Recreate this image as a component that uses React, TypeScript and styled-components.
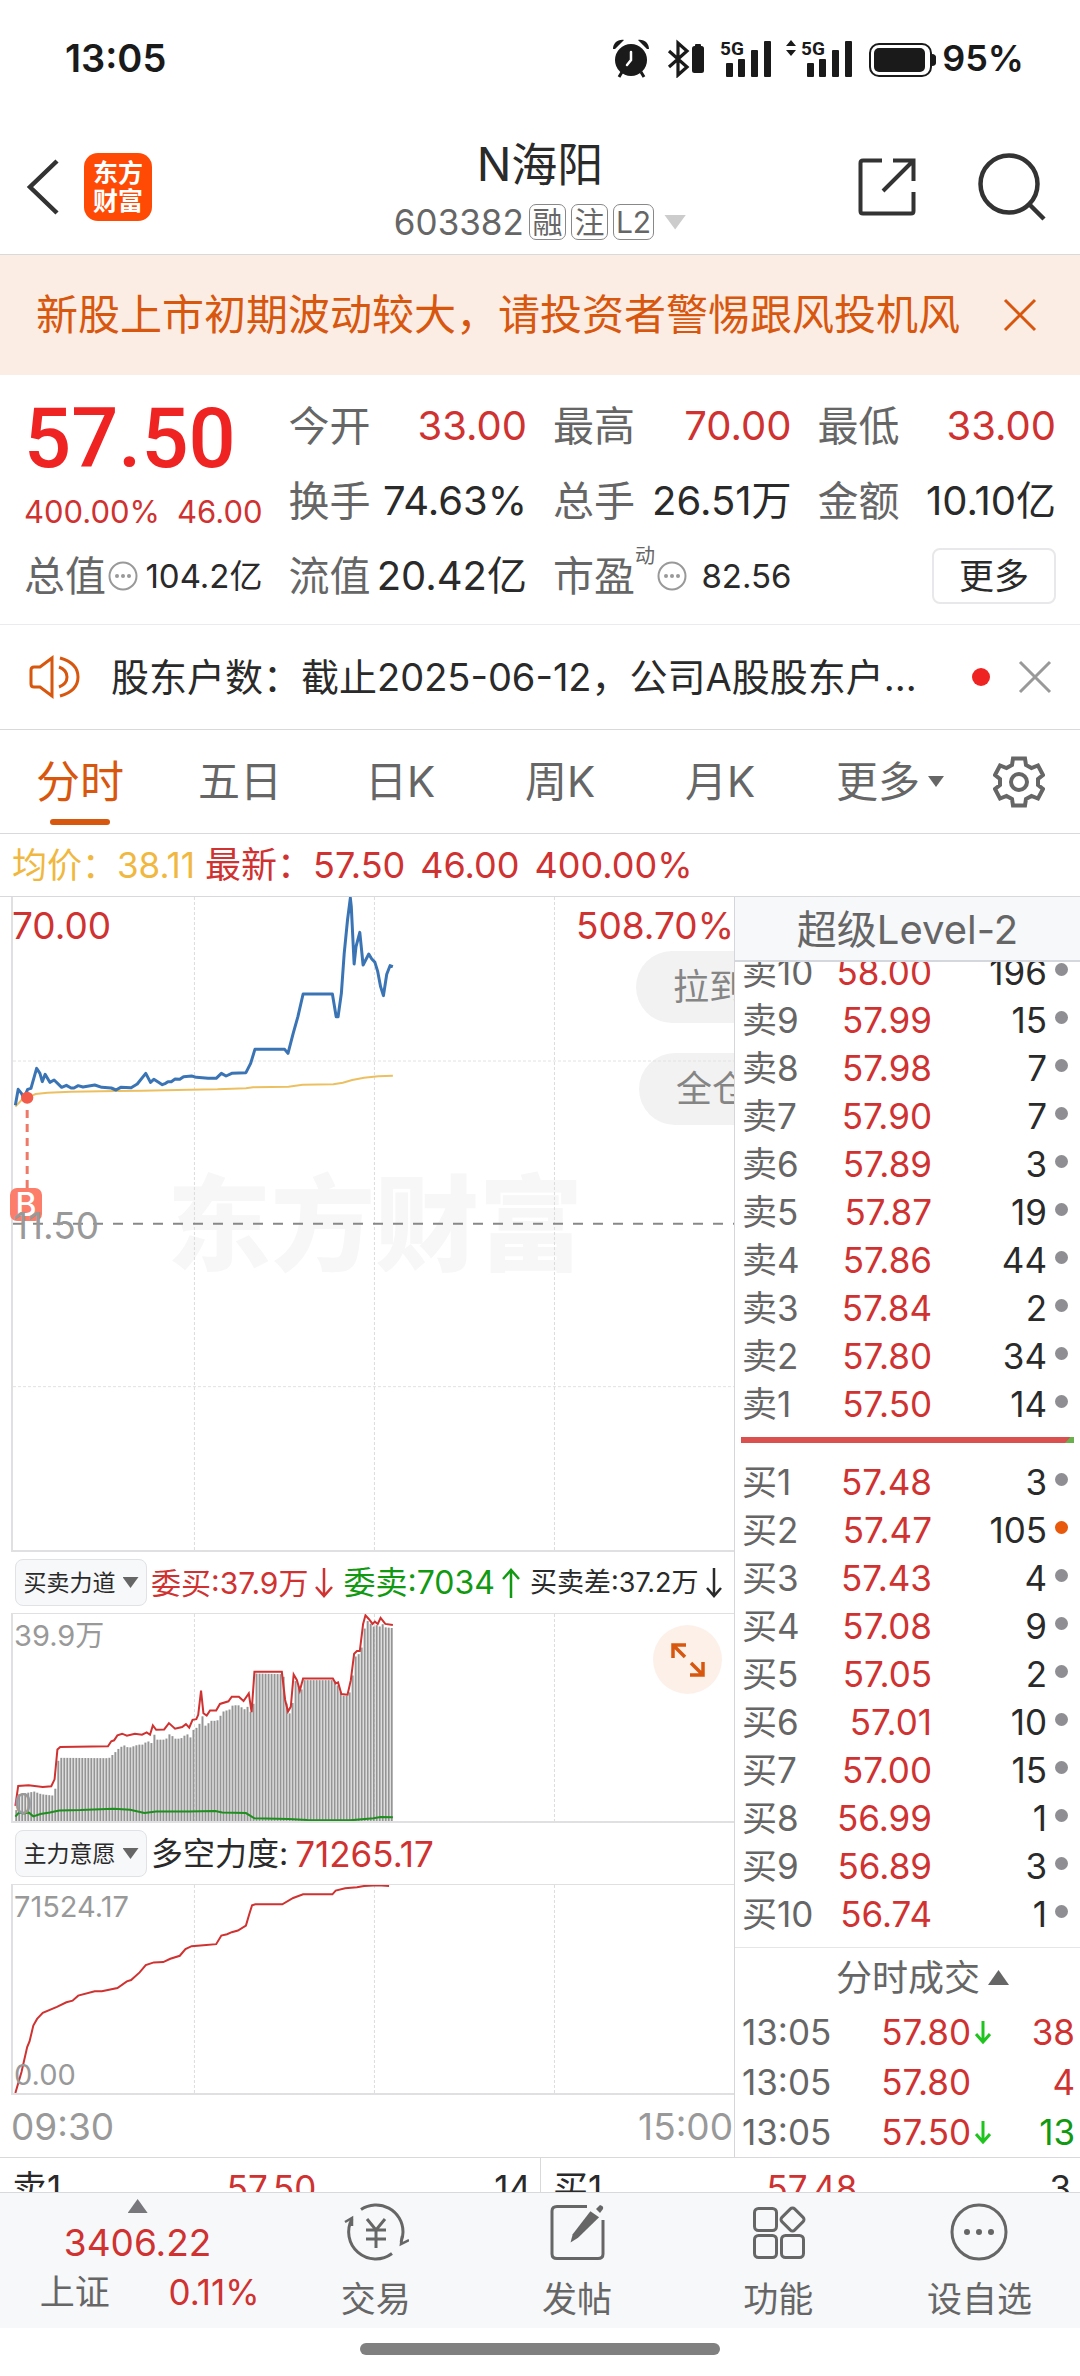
import React from "react";
import styled, { createGlobalStyle } from "styled-components";

const color = {
  red: "#cf3230",
  green: "#119911",
  orange: "#d8570f",
  text: "#2a2a2a",
  sub: "#666666",
  mute: "#999999",
  line: "#d9d9db",
  panel: "#f7f8fa",
};

const GlobalStyle = createGlobalStyle`
  * { box-sizing: border-box; }
  body {
    margin: 0;
    background: #fff;
    color: ${color.text};
    font-family: "Inter", "Noto Sans CJK SC", sans-serif;
  }
  button { font: inherit; color: inherit; background: none; border: 0; padding: 0; cursor: pointer; }
  a { color: inherit; text-decoration: none; }
  dl, dd, dt, h1, p { margin: 0; font-weight: 400; }
  svg { display: block; }
`;

const Page = styled.div`
  display: flex;
  flex-direction: column;
  width: 100%;
  overflow: hidden;
`;

/* ---------- status bar ---------- */

const StatusBar = styled.div`
  display: flex;
  align-items: center;
  justify-content: space-between;
  height: 120px;
  padding: 0 56px 4px 65px;
  color: #1a1a1a;
  font-size: 38px;
  font-weight: 600;
  line-height: 40px;
`;

const StatusRight = styled.div`
  display: flex;
  align-items: center;
  gap: 4px;
  font-size: 36px;
`;

const SignalBars = ({ x }: { x: number }) => (
  <g>
    <text x={x - 6} y={17} fontFamily="Roboto, sans-serif" fontWeight={700} fontSize={19}>5G</text>
    <rect x={x} y={25} width={7} height={14} rx={1} />
    <rect x={x + 12} y={21} width={7} height={18} rx={1} />
    <rect x={x + 25} y={12} width={7} height={27} rx={1} />
    <rect x={x + 38} y={3} width={7} height={36} rx={1} />
  </g>
);

const StatusIcons = () => (
  <svg width="325" height="40" viewBox="0 0 325 40" fill="#1a1a1a" aria-hidden="true">
    <circle cx="18" cy="22" r="16" />
    <path d="M0 11C0 5 5 1 11 2L2 11Z M36 11C36 5 31 1 25 2L34 11Z" />
    <path d="M9 34L6 39M28 34L31 39" stroke="#1a1a1a" strokeWidth="3" />
    <path d="M18 14V22L14 27" fill="none" stroke="#fff" strokeWidth="2.5" strokeLinecap="round" />
    <path d="M56 13L74 29L65 37V5L74 13L56 29" fill="none" stroke="#1a1a1a" strokeWidth="3.2" />
    <rect x="79" y="8" width="12" height="27" rx="2.5" />
    <rect x="82" y="6" width="6" height="4" rx="1" />
    <SignalBars x={113} />
    <path d="M173 8L178 2L183 8ZM173 12L178 18L183 12Z" />
    <SignalBars x={194} />
    <rect x="257" y="6" width="61" height="32" rx="9" fill="none" stroke="#1a1a1a" strokeWidth="2" />
    <rect x="261" y="10" width="51" height="24" rx="5" />
    <path d="M319 16C322 16 323 18 323 19V25C323 26 322 28 319 28Z" />
  </svg>
);

/* ---------- header ---------- */

const Header = styled.header`
  display: grid;
  grid-template-columns: 1fr auto 1fr;
  align-items: center;
  height: 135px;
  padding: 0 26px;
  border-bottom: 1px solid ${color.line};
`;

const HeaderSide = styled.div<{ $end?: boolean }>`
  display: flex;
  align-items: center;
  justify-content: ${(p) => (p.$end ? "flex-end" : "flex-start")};
  gap: ${(p) => (p.$end ? 62 : 24)}px;
  padding-right: ${(p) => (p.$end ? 8 : 0)}px;
`;

const Logo = styled.div`
  display: grid;
  place-content: center;
  width: 68px;
  height: 68px;
  border-radius: 14px;
  background: #ff4a05;
  color: #fff;
  font-size: 25px;
  font-weight: 700;
  line-height: 28px;
  text-align: center;
`;

const TitleBlock = styled.div`
  display: flex;
  flex-direction: column;
  align-items: center;
  gap: 10px;
`;

const Title = styled.h1`
  font-size: 46px;
  line-height: 60px;
`;

const CodeLine = styled.button`
  display: flex;
  align-items: center;
  gap: 5px;
  color: ${color.sub};
  font-size: 35px;
  line-height: 36px;
`;

const Tag = styled.span`
  display: grid;
  place-content: center;
  min-width: 37px;
  height: 36px;
  padding: 0 2px;
  border: 1px solid #888;
  border-radius: 7px;
  font-size: 30px;
  line-height: 30px;
`;

const Triangle = styled.span<{ $up?: boolean; $size: number; $fill: string }>`
  display: inline-block;
  flex: none;
  width: ${(p) => p.$size}px;
  height: ${(p) => Math.round(p.$size * 0.7)}px;
  background: ${(p) => p.$fill};
  clip-path: ${(p) => (p.$up ? "polygon(50% 0, 100% 100%, 0 100%)" : "polygon(0 0, 100% 0, 50% 100%)")};
`;

const CodeArrow = styled.span`
  display: flex;
  padding-left: 5px;
`;

/* ---------- banner ---------- */

const Banner = styled.div`
  display: flex;
  align-items: center;
  justify-content: space-between;
  height: 120px;
  padding: 0 43px 0 36px;
  background: #fcede4;
  color: ${color.orange};
  font-size: 42px;
  line-height: 60px;
  white-space: nowrap;
`;

const Cross = ({ stroke }: { stroke: string }) => (
  <svg width="34" height="34" viewBox="0 0 34 34" aria-hidden="true">
    <path d="M2 2L32 32M32 2L2 32" stroke={stroke} strokeWidth="3" />
  </svg>
);

/* ---------- quote ---------- */

const Quote = styled.dl`
  display: grid;
  grid-template-columns: repeat(4, minmax(0, 1fr));
  grid-auto-rows: 75px;
  column-gap: 26px;
  padding: 13px 24px 11px;
  border-bottom: 1px solid #ebebed;
`;

const PriceCell = styled.div`
  grid-row: span 2;
  display: flex;
  flex-direction: column;
  gap: 15px;
  padding-top: 9px;
  color: ${color.red};
`;

const BigPrice = styled.dd`
  color: #f02323;
  font-family: "Roboto", sans-serif;
  font-size: 83px;
  font-weight: 500;
  line-height: 84px;
`;

const Change = styled.dd`
  display: flex;
  justify-content: space-between;
  font-size: 31px;
  line-height: 32px;
`;

const Cell = styled.div`
  display: flex;
  align-items: center;
  justify-content: space-between;
  white-space: nowrap;
  line-height: 60px;
`;

const Label = styled.dt`
  display: flex;
  align-items: center;
  color: ${color.sub};
  font-size: 41px;
`;

const Value = styled.dd<{ $red?: boolean; $small?: boolean }>`
  color: ${(p) => (p.$red ? color.red : color.text)};
  font-size: ${(p) => (p.$small ? 33 : 40)}px;
`;

const Sup = styled.sup`
  align-self: flex-start;
  font-size: 20px;
  line-height: 20px;
`;

const InfoButton = styled.button`
  display: flex;
  padding: 0 2px;
`;

const Info = () => (
  <InfoButton aria-label="说明">
    <svg width="30" height="30" viewBox="0 0 30 30" fill="#999" aria-hidden="true">
      <circle cx="15" cy="15" r="13.5" fill="none" stroke="#999" strokeWidth="2" />
      <circle cx="9" cy="15" r="2" />
      <circle cx="15" cy="15" r="2" />
      <circle cx="21" cy="15" r="2" />
    </svg>
  </InfoButton>
);

const MoreButton = styled.button`
  align-self: center;
  justify-self: end;
  height: 56px;
  padding: 0 25px;
  border: 2px solid #e8e8ea;
  border-radius: 8px;
  font-size: 35px;
  line-height: 50px;
`;

/* ---------- news ---------- */

const News = styled.div`
  display: flex;
  align-items: center;
  height: 105px;
  padding: 0 28px 0 29px;
  border-bottom: 1px solid ${color.line};
  font-size: 38px;
  line-height: 60px;
`;

const NewsText = styled.a`
  flex: 1;
  min-width: 0;
  padding-left: 30px;
  white-space: nowrap;
`;

const NewsDot = styled.span`
  width: 18px;
  height: 18px;
  margin-right: 28px;
  border-radius: 50%;
  background: #f02323;
`;

/* ---------- tabs ---------- */

const Tabs = styled.nav`
  display: grid;
  grid-template-columns: repeat(5, 160fr) 180fr 100fr;
  height: 104px;
  border-bottom: 1px solid ${color.line};
`;

const Tab = styled.button<{ $active?: boolean }>`
  position: relative;
  display: flex;
  align-items: center;
  justify-content: center;
  gap: 8px;
  color: ${(p) => (p.$active ? color.orange : color.sub)};
  font-size: ${(p) => (p.$active ? 44 : 42)}px;
  line-height: 60px;
  &::after {
    content: "";
    position: absolute;
    left: 50%;
    bottom: 8px;
    width: 60px;
    height: 6px;
    margin-left: -30px;
    border-radius: 3px;
    background: ${(p) => (p.$active ? color.orange : "transparent")};
  }
`;

const SettingsTab = styled(Tab)`
  justify-content: flex-start;
  padding-left: 13px;
`;

const Gear = () => (
  <svg width="52" height="52" viewBox="0 0 52 52" fill="none" stroke="#666" strokeWidth="4" aria-hidden="true">
    <path d="M20 2.5H32L33 9L38.500 12L45 9.500L50 19L45 23V29L50 33L45 42.500L38.500 40L33 43L32 49.500H20L19 43L13.500 40L7 42.500L2 33L7 29V23L2 19L7 9.500L13.500 12L19 9Z" />
    <circle cx="26" cy="26" r="8" />
  </svg>
);

const Legend = styled.div`
  display: flex;
  align-items: center;
  gap: 10px;
  height: 63px;
  padding: 0 12px;
  border-bottom: 1px solid ${color.line};
  color: ${color.red};
  font-size: 35px;
  line-height: 50px;
  white-space: nowrap;
`;

const Average = styled.span`
  color: #f0b840;
`;

const Latest = styled.span`
  display: flex;
  gap: 15px;
  font-size: 36px;
`;

/* ---------- charts ---------- */

const Main = styled.main`
  display: grid;
  grid-template-columns: minmax(0, 1fr) 346px;
`;

const Charts = styled.section`
  display: flex;
  flex-direction: column;
  overflow: hidden;
`;

const Plot = styled.div<{ $height: number; $top?: boolean }>`
  position: relative;
  height: ${(p) => p.$height}px;
  margin-left: 11px;
  border-left: 2px solid #e0e0e2;
  border-bottom: 2px solid #e0e0e2;
  border-top: ${(p) => (p.$top ? "1px solid #e0e0e2" : "0")};
`;

const Canvas = styled.svg`
  position: absolute;
  inset: 0;
  width: 100%;
  height: 100%;
  path, line { vector-effect: non-scaling-stroke; fill: none; }
`;

const PlotLabel = styled.span<{ $x?: number; $right?: boolean; $y: number; $tone: string; $big?: boolean }>`
  position: absolute;
  top: ${(p) => p.$y}px;
  ${(p) => (p.$right ? "right: 0;" : `left: ${p.$x ?? 1}px;`)}
  color: ${(p) => p.$tone};
  font-size: ${(p) => (p.$big ? 37 : 29)}px;
  line-height: 40px;
`;

const Watermark = styled.span`
  position: absolute;
  top: 268px;
  left: 154px;
  color: #f7f7f8;
  font-size: 104px;
  font-weight: 900;
  line-height: 120px;
`;

const BuyMark = styled.span`
  position: absolute;
  top: 291px;
  left: -3px;
  width: 32px;
  height: 33px;
  border-radius: 7px;
  background: #fb7d6a;
  color: #fff;
  font-size: 32px;
  font-weight: 500;
  line-height: 33px;
  text-align: center;
`;

const Pill = styled.button<{ $y: number; $width: number }>`
  position: absolute;
  top: ${(p) => p.$y}px;
  right: -60px;
  width: ${(p) => p.$width}px;
  height: 72px;
  padding-left: 37px;
  border-radius: 36px;
  background: #f2f2f2;
  color: #858585;
  font-size: 36px;
  line-height: 70px;
  text-align: left;
  white-space: nowrap;
`;

const Expand = styled.button`
  position: absolute;
  top: 11px;
  right: 12px;
  display: grid;
  place-content: center;
  width: 69px;
  height: 69px;
  border-radius: 50%;
  background: #fdf0e9;
`;

const IndicatorRow = styled.div`
  display: flex;
  align-items: center;
  gap: 4px;
  height: 61px;
  padding-left: 15px;
  white-space: nowrap;
  line-height: 40px;
`;

const Picker = styled.button`
  display: flex;
  flex: none;
  align-items: center;
  justify-content: center;
  gap: 7px;
  width: 132px;
  height: 47px;
  border: 1px solid #e0e2e6;
  border-radius: 8px;
  background: ${color.panel};
  font-size: 23px;
`;

const Figure = styled.span<{ $tone: string; $size: number }>`
  display: flex;
  flex: none;
  align-items: center;
  gap: 7px;
  margin-right: 6px;
  color: ${(p) => p.$tone};
  font-size: ${(p) => p.$size}px;
`;

const Strength = styled.span`
  color: ${color.red};
  font-size: 35px;
`;

const Arrow = ({ up, stroke = "currentColor", w = 18, h = 30 }: { up?: boolean; stroke?: string; w?: number; h?: number }) => (
  <svg width={w} height={h} viewBox={`0 0 ${w} ${h}`} fill="none" stroke={stroke} strokeWidth={h > 25 ? 2.5 : 3} aria-hidden="true">
    {up ? (
      <path d={`M${w / 2} ${h}V2M1 ${w / 2 + 2}L${w / 2} 2L${w - 1} ${w / 2 + 2}`} />
    ) : (
      <path d={`M${w / 2} 0V${h - 2}M1 ${h - w / 2 - 2}L${w / 2} ${h - 2}L${w - 1} ${h - w / 2 - 2}`} />
    )}
  </svg>
);

const TimeAxis = styled.div`
  display: flex;
  align-items: center;
  justify-content: space-between;
  height: 62px;
  padding: 2px 1px 0 11px;
  color: ${color.mute};
  font-size: 37px;
  line-height: 40px;
`;

type Point = [number, number];
const parse = (s: string): Point[] => s.split(" ").map((p) => p.split(",").map(Number) as Point);

const price = "32,676 38,628 45,640 50,655 58,628 65,625 77,565 84,580 89,605 95,583 105,607 114,600 130,622 140,616 150,624 156,624 165,617 175,621 200,615 215,622 235,624 245,630 255,622 277,623 290,612 308,580 318,607 325,598 335,607 343,614 350,610 355,605 362,605 370,597 380,598 388,590 405,588 415,592 440,595 457,595 468,580 478,588 490,580 520,578 530,550 539,508 602,508 609,520 620,460 630,410 641,342 703,342 711,410 715,410 722,340 728,220 735,120 741,54 743,80 749,252 753,200 761,157 768,255 780,222 786,236 793,247 799,275 805,320 811,347 818,283 825,257 831,260";
const average = "32,680 45,660 57,653 75,642 100,638 150,635 245,633 300,632 400,629 460,628 520,625 535,622 610,620 640,614 705,613 725,608 745,600 770,593 800,589 831,587";
const bids = "32,830 38,770 60,768 90,773 108,771 115,750 121,660 127,652 228,650 235,635 241,632 248,617 258,612 268,618 285,612 300,615 310,608 317,615 323,587 330,600 347,599 357,580 370,597 385,592 393,583 400,594 407,570 415,568 419,555 425,482 430,550 437,557 444,542 457,542 465,522 483,514 490,500 505,500 515,513 526,490 532,547 538,425 596,425 603,510 609,545 615,530 621,433 628,450 634,482 641,445 704,445 710,460 715,457 722,492 735,494 742,450 749,370 755,362 761,362 768,280 773,254 780,265 788,280 793,273 799,280 805,262 815,280 831,283";
const asks = "32,863 40,850 50,853 60,850 70,862 85,855 105,850 125,844 170,843 240,839 275,842 305,852 330,847 400,847 455,846 470,850 520,852 538,868 610,870 650,873 740,874 790,868 805,864 831,865";
const spread = "32,843 38,795 70,787 85,795 108,799 114,785 120,695 127,685 228,686 240,670 250,655 260,647 270,655 290,645 300,645 310,633 317,645 323,612 330,630 348,630 357,612 368,627 380,627 393,612 400,625 407,600 418,590 425,555 432,588 445,573 457,573 470,545 485,538 490,526 502,526 515,538 522,530 532,558 539,430 597,432 603,515 609,552 615,545 621,450 628,460 634,487 641,450 704,450 711,463 722,497 736,497 742,455 749,380 755,372 761,370 768,300 774,270 780,275 787,290 793,280 799,294 805,275 811,290 831,293";
const intent = "32,823 45,760 57,685 62,668 70,620 78,600 90,582 120,564 140,550 153,545 165,530 200,517 215,517 248,507 268,487 277,483 295,460 308,438 325,430 345,429 360,419 380,410 392,390 405,381 430,378 457,375 468,349 480,345 490,339 503,334 520,319 527,285 533,258 540,255 597,255 620,236 641,225 703,225 710,214 730,207 755,204 770,200 800,198 823,200";

const toPath = (s: string) => "M" + parse(s).map((p) => p.join(" ")).join("L");

const valueAt = (points: Point[], x: number) => {
  const i = points.findIndex((p) => p[0] >= x);
  if (i < 0) return points[points.length - 1][1];
  if (i === 0) return points[0][1];
  const [x0, y0] = points[i - 1];
  const [x1, y1] = points[i];
  return y0 + ((y1 - y0) * (x - x0)) / (x1 - x0);
};

const spreadPoints = parse(spread);
const STEP = 6.357;
const spreadBars = Array.from({ length: 126 }, (_, i) => {
  const x = 31.8 + i * STEP;
  return { x, y: valueAt(spreadPoints, x) };
});

const Columns = ({ from, to }: { from: number; to: number }) => (
  <>
    {[411, 792, 1173].map((x) => (
      <line key={x} x1={x} x2={x} y1={from} y2={to} stroke="#dcdcdf" strokeWidth="1" strokeDasharray="3 2" />
    ))}
  </>
);

/* ---------- order book ---------- */

const Book = styled.aside`
  display: flex;
  flex-direction: column;
  border-left: 1px solid #d4d6da;
`;

const BookTitle = styled.button`
  height: 65px;
  padding-top: 3px;
  border-bottom: 2px solid #d4d8de;
  background: ${color.panel};
  color: ${color.sub};
  font-size: 40px;
  line-height: 60px;
`;

const AskWindow = styled.div`
  display: flex;
  flex-direction: column;
  justify-content: flex-end;
  height: 466px;
  overflow: hidden;
`;

const BookTable = styled.table`
  width: 100%;
  flex: none;
  table-layout: fixed;
  border-collapse: collapse;
  font-size: 35px;
  line-height: 48px;
  white-space: nowrap;
  td, th { height: 48px; padding: 0; text-align: right; font-weight: 400; }
  th { width: 88px; padding-left: 7px; text-align: left; color: ${color.sub}; }
`;

const PriceTd = styled.td`
  width: 109px;
  color: ${color.red};
`;

const DotTd = styled.td`
  width: 33px;
`;

const Dot = styled.span<{ $hot?: boolean }>`
  display: block;
  width: 13px;
  height: 13px;
  margin: 0 0 6px 8px;
  border-radius: 50%;
  background: ${(p) => (p.$hot ? "#e8590c" : "#8e8e93")};
`;

const Balance = styled.div`
  display: flex;
  justify-content: flex-end;
  height: 6px;
  margin: 9px 6px 15px;
  background: #d9504e;
  &::after {
    content: "";
    width: 9px;
    background: #6ab04c;
    clip-path: polygon(100% 0, 100% 100%, 0 100%, 60% 0);
  }
`;

const TradesTitle = styled.button`
  display: flex;
  align-items: center;
  justify-content: center;
  gap: 8px;
  height: 60px;
  margin-top: 9px;
  padding-left: 30px;
  border-top: 1px solid #e6e6e8;
  color: ${color.sub};
  font-size: 36px;
  line-height: 50px;
`;

const Trades = styled.table`
  width: 100%;
  table-layout: fixed;
  border-collapse: collapse;
  font-size: 35px;
  line-height: 50px;
  td { height: 50px; padding: 0; text-align: right; }
  td:first-child { width: 110px; padding-left: 7px; text-align: left; color: ${color.sub}; }
  td:nth-child(2) { width: 126px; color: ${color.red}; }
  td:nth-child(3) { width: 24px; padding-left: 4px; }
`;

const Volume = styled.td<{ $sell?: boolean }>`
  && { padding-right: 5px; }
  color: ${(p) => (p.$sell ? color.green : color.red)};
`;

const sells = [
  ["卖10", "58.00", "196"], ["卖9", "57.99", "15"], ["卖8", "57.98", "7"], ["卖7", "57.90", "7"], ["卖6", "57.89", "3"],
  ["卖5", "57.87", "19"], ["卖4", "57.86", "44"], ["卖3", "57.84", "2"], ["卖2", "57.80", "34"], ["卖1", "57.50", "14"],
];
const buys = [
  ["买1", "57.48", "3"], ["买2", "57.47", "105"], ["买3", "57.43", "4"], ["买4", "57.08", "9"], ["买5", "57.05", "2"],
  ["买6", "57.01", "10"], ["买7", "57.00", "15"], ["买8", "56.99", "1"], ["买9", "56.89", "3"], ["买10", "56.74", "1"],
];
const trades = [
  { price: "57.80", volume: "38", down: true, sell: false },
  { price: "57.80", volume: "4", down: false, sell: false },
  { price: "57.50", volume: "13", down: true, sell: true },
];

const Levels = ({ rows }: { rows: string[][] }) => (
  <BookTable>
    <tbody>
      {rows.map(([name, value, volume]) => (
        <tr key={name}>
          <th scope="row">{name}</th>
          <PriceTd>{value}</PriceTd>
          <td>{volume}</td>
          <DotTd><Dot $hot={name === "买2"} /></DotTd>
        </tr>
      ))}
    </tbody>
  </BookTable>
);

/* ---------- bottom ---------- */

const BestRow = styled.div`
  display: grid;
  grid-template-columns: 1fr 1fr;
  height: 35px;
  overflow: hidden;
  border-top: 1px solid ${color.line};
`;

const Best = styled.div`
  display: grid;
  grid-template-columns: 1fr auto 1fr;
  height: 60px;
  padding: 0 9px 0 12px;
  font-size: 35px;
  line-height: 60px;
  & + & { border-left: 1px solid ${color.line}; }
  span:nth-child(2) { color: ${color.red}; }
  span:nth-child(3) { text-align: right; }
`;

const BottomNav = styled.nav`
  display: grid;
  grid-template-columns: 275fr repeat(4, 201fr);
  height: 136px;
  border-top: 1px solid ${color.line};
  background: ${color.panel};
  color: ${color.sub};
  font-size: 35px;
`;

const IndexButton = styled.button`
  display: flex;
  flex-direction: column;
  align-items: center;
  padding-top: 6px;
  color: ${color.red};
  font-size: 37px;
  line-height: 50px;
`;

const IndexValue = styled.span`
  margin-top: 5px;
`;

const IndexChange = styled.span`
  display: flex;
  justify-content: space-between;
  width: 244px;
  padding-left: 24px;
  color: ${color.red};
  font-size: 35px;
  line-height: 48px;
`;

const IndexName = styled.span`
  color: ${color.sub};
`;

const NavItem = styled.a`
  display: flex;
  flex-direction: column;
  align-items: center;
  gap: 11px;
  padding-top: 8px;
  line-height: 50px;
`;

const NavSvg = styled.svg.attrs({ width: 66, height: 62, viewBox: "0 0 66 62", "aria-hidden": true })`
  fill: none;
  stroke: #666;
  stroke-width: 3;
`;

const TradeIcon = () => (
  <NavSvg>
    <path d="M18 8.500A27 27 0 0 1 60 31Q60 36 58 41" />
    <path d="M49 52.500A27 27 0 0 1 9 18" />
    <path d="M2 21L9 17V25M66 39L58 43L59 35" strokeWidth="2.500" />
    <path d="M24 18L33 29L42 18M33 29V47M23 29H43M23 38H43" />
  </NavSvg>
);

const PostIcon = () => (
  <NavSvg>
    <path d="M43 5.500H13Q8 5.500 8 10V53Q8 57.500 13 57.500H54Q59 57.500 59 53V19" />
    <path d="M48 11L56 18L33 36L25 40L28 32Z" fill="#666" stroke="none" transform="rotate(-6 40 26)" />
    <path d="M52 8L56 4Q60 5 59 8L56 12Z" fill="#666" stroke="none" />
  </NavSvg>
);

const GridIcon = () => (
  <NavSvg>
    <rect x="9.500" y="7.500" width="22" height="22" rx="4" />
    <rect x="9.500" y="34.500" width="22" height="22" rx="4" />
    <rect x="36.500" y="34.500" width="22" height="22" rx="4" />
    <rect x="38.500" y="9.500" width="18" height="18" rx="3" transform="rotate(45 47.500 18.500)" />
  </NavSvg>
);

const DotsIcon = () => (
  <NavSvg>
    <circle cx="33" cy="31" r="27" />
    <g fill="#666" stroke="none">
      <circle cx="21" cy="31" r="3" />
      <circle cx="33" cy="31" r="3" />
      <circle cx="45" cy="31" r="3" />
    </g>
  </NavSvg>
);

const HomeArea = styled.div`
  display: flex;
  justify-content: center;
  height: 48px;
  padding-top: 15px;
`;

const HomeBar = styled.div`
  width: 33.3%;
  height: 12px;
  border-radius: 6px;
  background: #808080;
`;

export default function App() {
  return (
    <Page>
      <GlobalStyle />
      <StatusBar>
        <span>13:05</span>
        <StatusRight>
          <StatusIcons />
          <span>95%</span>
        </StatusRight>
      </StatusBar>

      <Header>
        <HeaderSide>
          <button aria-label="返回">
            <svg width="34" height="56" viewBox="0 0 34 56" fill="none" aria-hidden="true">
              <path d="M31 2L4 28L31 54" stroke="#333" strokeWidth="4.500" />
            </svg>
          </button>
          <Logo>东方<br />财富</Logo>
        </HeaderSide>
        <TitleBlock>
          <Title>N海阳</Title>
          <CodeLine>
            603382<Tag>融</Tag><Tag>注</Tag><Tag>L2</Tag>
            <CodeArrow><Triangle $size={22} $fill="#ccc" /></CodeArrow>
          </CodeLine>
        </TitleBlock>
        <HeaderSide $end>
          <button aria-label="分享">
            <svg width="58" height="58" viewBox="0 0 58 58" fill="none" stroke="#333" strokeWidth="4" aria-hidden="true">
              <path d="M24 2.500H5Q2.500 2.500 2.500 5V53Q2.500 55.500 5 55.500H53Q55.500 55.500 55.500 53V34" />
              <path d="M35 2.500H55.500V23M55 3L25 33" />
            </svg>
          </button>
          <button aria-label="搜索">
            <svg width="68" height="68" viewBox="0 0 68 68" fill="none" stroke="#333" strokeWidth="4.500" aria-hidden="true">
              <circle cx="31" cy="31" r="28.500" />
              <path d="M51 51L66 66" />
            </svg>
          </button>
        </HeaderSide>
      </Header>

      <Banner>
        <span>新股上市初期波动较大，请投资者警惕跟风投机风</span>
        <button aria-label="关闭提示"><Cross stroke={color.orange} /></button>
      </Banner>

      <Quote>
        <PriceCell>
          <BigPrice>57.50</BigPrice>
          <Change><span>400.00%</span><span>46.00</span></Change>
        </PriceCell>
        <Cell><Label>今开</Label><Value $red>33.00</Value></Cell>
        <Cell><Label>最高</Label><Value $red>70.00</Value></Cell>
        <Cell><Label>最低</Label><Value $red>33.00</Value></Cell>
        <Cell><Label>换手</Label><Value>74.63%</Value></Cell>
        <Cell><Label>总手</Label><Value>26.51万</Value></Cell>
        <Cell><Label>金额</Label><Value>10.10亿</Value></Cell>
        <Cell><Label>总值<Info /></Label><Value $small>104.2亿</Value></Cell>
        <Cell><Label>流值</Label><Value>20.42亿</Value></Cell>
        <Cell><Label>市盈<Sup>动</Sup><Info /></Label><Value $small>82.56</Value></Cell>
        <MoreButton>更多</MoreButton>
      </Quote>

      <News>
        <svg width="52" height="44" viewBox="0 0 52 44" fill="none" stroke={color.orange} strokeWidth="3" aria-hidden="true">
          <path d="M23 3L11 12H5Q2 12 2 15V29Q2 32 5 32H11L23 41Z" />
          <path d="M30 12Q38 15 38 22T30 32M31 3Q49 8 49 22T31 41" />
        </svg>
        <NewsText href="#news">股东户数：截止2025-06-12，公司A股股东户...</NewsText>
        <NewsDot />
        <button aria-label="关闭公告"><Cross stroke="#999" /></button>
      </News>

      <Tabs>
        <Tab $active>分时</Tab>
        <Tab>五日</Tab>
        <Tab>日K</Tab>
        <Tab>周K</Tab>
        <Tab>月K</Tab>
        <Tab>更多<Triangle $size={16} $fill="#666" /></Tab>
        <SettingsTab aria-label="设置"><Gear /></SettingsTab>
      </Tabs>

      <Legend>
        <Average>均价：38.11</Average>
        <Latest>
          <span>最新：57.50</span>
          <span>46.00</span>
          <span>400.00%</span>
        </Latest>
      </Legend>

      <Main>
        <Charts>
          <Plot $height={655}>
            <Watermark>东方财富</Watermark>
            <Pill $y={54} $width={158}>拉到</Pill>
            <Pill $y={156} $width={155}>全仓</Pill>
            <Canvas viewBox="27 51 1526 1959" preserveAspectRatio="none">
              <Columns from={51} to={2010} />
              <line x1="27" x2="1553" y1="543" y2="543" stroke="#e2e2e4" strokeDasharray="3 2" />
              <line x1="27" x2="1553" y1="1520" y2="1520" stroke="#e2e2e4" strokeDasharray="3 2" />
              <line x1="27" x2="1553" y1="1031" y2="1031" stroke="#888" strokeWidth="2" strokeDasharray="10 10" />
              <path d={toPath(average)} stroke="#ecc060" strokeWidth="2" />
              <path d={toPath(price)} stroke="#3a74b4" strokeWidth="3" strokeLinejoin="round" />
              <line x1="57" x2="57" y1="690" y2="925" stroke="#f07868" strokeWidth="3" strokeDasharray="8 6" />
              <ellipse cx="57" cy="653" rx="13" ry="18" fill="#f25a4a" />
            </Canvas>
            <BuyMark>B</BuyMark>
            <PlotLabel $big $x={-1} $y={9} $tone={color.red}>70.00</PlotLabel>
            <PlotLabel $big $right $y={9} $tone={color.red}>508.70%</PlotLabel>
            <PlotLabel $big $x={0} $y={309} $tone={color.mute}>11.50</PlotLabel>
          </Plot>

          <IndicatorRow>
            <Picker>买卖力道<Triangle $size={16} $fill="#666" /></Picker>
            <Figure $tone={color.red} $size={30}>委买:37.9万<Arrow /></Figure>
            <Figure $tone={color.green} $size={32}>委卖:7034<Arrow up /></Figure>
            <Figure $tone={color.text} $size={27}>买卖差:37.2万<Arrow w={16} /></Figure>
          </IndicatorRow>

          <Plot $height={210} $top>
            <Canvas viewBox="27 250 1526 626" preserveAspectRatio="none">
              <Columns from={250} to={876} />
              {spreadBars.map((b) => (
                <rect key={b.x} x={b.x} y={b.y} width={4.2} height={876 - b.y} fill="#959595" />
              ))}
              <path d={toPath(bids)} stroke={color.red} strokeWidth="2" />
              <path d={toPath(asks)} stroke="#1d8f1d" strokeWidth="2" />
            </Canvas>
            <PlotLabel $y={2} $tone={color.mute}>39.9万</PlotLabel>
            <PlotLabel $y={170} $tone={color.mute}>0</PlotLabel>
            <Expand aria-label="展开">
              <svg width="36" height="36" viewBox="0 0 36 36" fill="none" stroke={color.orange} strokeWidth="3.500" aria-hidden="true">
                <path d="M3 16V3H16M3 3L15 15M33 20V33H20M33 33L21 21" />
              </svg>
            </Expand>
          </Plot>

          <IndicatorRow>
            <Picker>主力意愿<Triangle $size={16} $fill="#666" /></Picker>
            <Figure $tone={color.text} $size={32}>多空力度:<Strength>71265.17</Strength></Figure>
          </IndicatorRow>

          <Plot $height={211} $top>
            <Canvas viewBox="27 197 1526 626" preserveAspectRatio="none">
              <Columns from={197} to={823} />
              <path d={toPath(intent)} stroke={color.red} strokeWidth="2" />
            </Canvas>
            <PlotLabel $y={2} $tone={color.mute}>71524.17</PlotLabel>
            <PlotLabel $y={170} $tone={color.mute}>0.00</PlotLabel>
          </Plot>

          <TimeAxis><span>09:30</span><span>15:00</span></TimeAxis>
        </Charts>

        <Book>
          <BookTitle>超级Level-2</BookTitle>
          <AskWindow><Levels rows={sells} /></AskWindow>
          <Balance />
          <Levels rows={buys} />
          <TradesTitle>分时成交<Triangle $up $size={21} $fill="#666" /></TradesTitle>
          <Trades>
            <tbody>
              {trades.map((t, i) => (
                <tr key={i}>
                  <td>13:05</td>
                  <td>{t.price}</td>
                  <td>{t.down && <Arrow stroke="#1fc41f" w={16} h={23} />}</td>
                  <Volume $sell={t.sell}>{t.volume}</Volume>
                </tr>
              ))}
            </tbody>
          </Trades>
        </Book>
      </Main>

      <BestRow>
        <Best><span>卖1</span><span>57.50</span><span>14</span></Best>
        <Best><span>买1</span><span>57.48</span><span>3</span></Best>
      </BestRow>

      <BottomNav>
        <IndexButton>
          <Triangle $up $size={20} $fill="#77777c" />
          <IndexValue>3406.22</IndexValue>
          <IndexChange><IndexName>上证</IndexName><span>0.11%</span></IndexChange>
        </IndexButton>
        <NavItem href="#trade"><TradeIcon />交易</NavItem>
        <NavItem href="#post"><PostIcon />发帖</NavItem>
        <NavItem href="#tools"><GridIcon />功能</NavItem>
        <NavItem href="#watch"><DotsIcon />设自选</NavItem>
      </BottomNav>

      <HomeArea><HomeBar /></HomeArea>
    </Page>
  );
}
